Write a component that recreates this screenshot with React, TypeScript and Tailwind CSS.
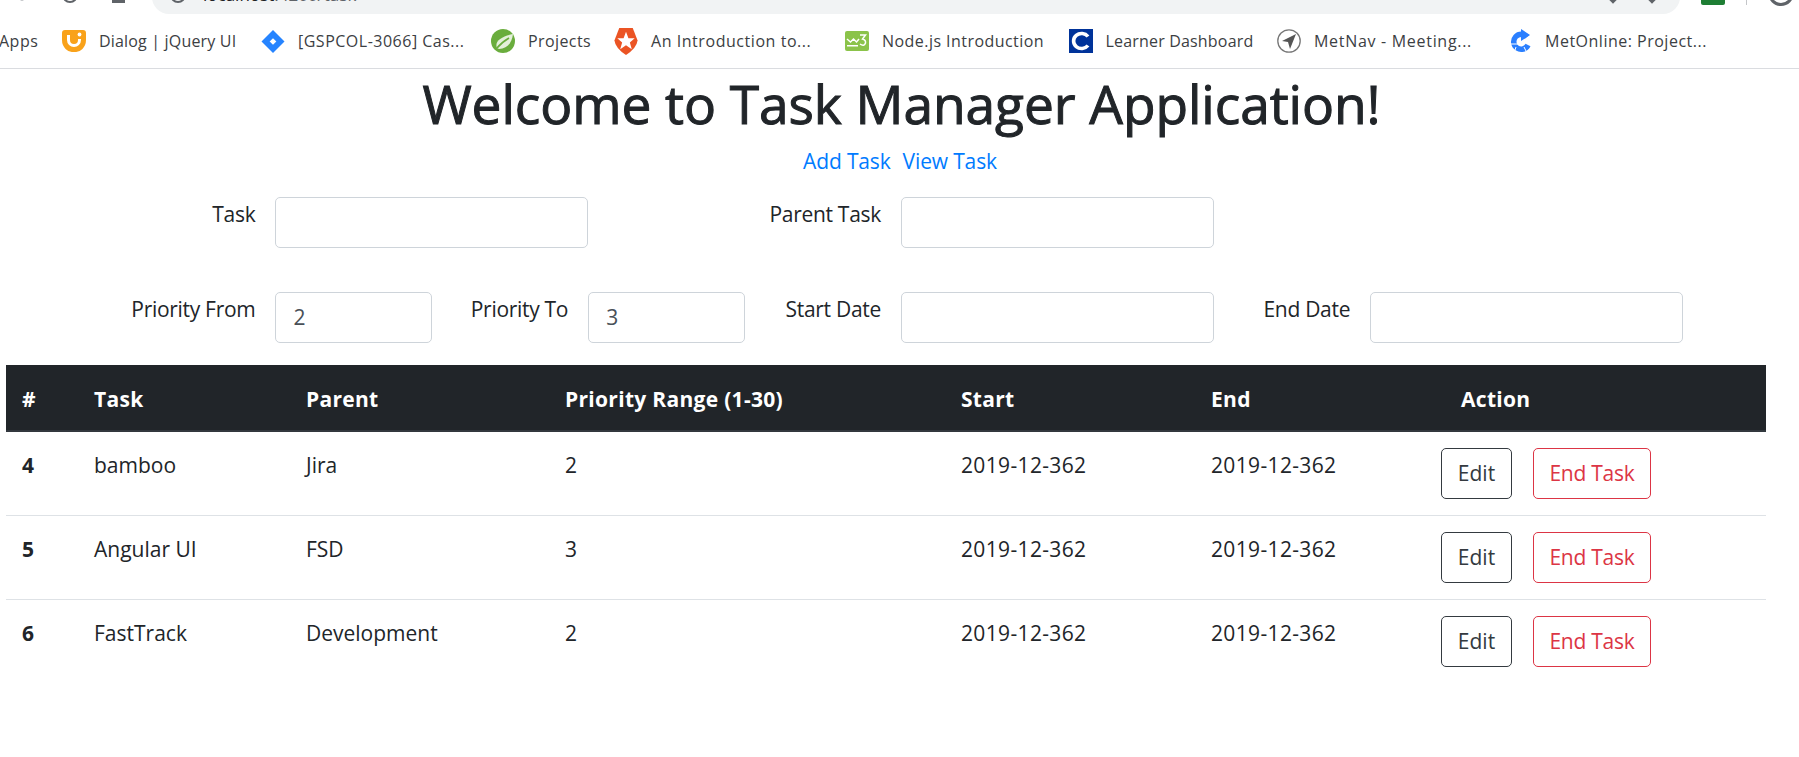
const font = { fontFamily: '"Open Sans", "Noto Sans", sans-serif' };

const Orange = () => (
  <svg width="24" height="22" viewBox="0 0 24 22"><path d="M0 3Q0 0 3 0H21Q24 0 24 3V10A11 12 0 0 1 12 22A11 12 0 0 1 0 10Z" fill="#f9a21a"/><path d="M6.5 5V10A5.5 5.5 0 0 0 17.500 10V9" stroke="#fff" strokeWidth="3" fill="none"/><circle cx="17.500" cy="4.500" r="1.900" fill="#fff"/></svg>
);
const Jira = () => (
  <svg width="24" height="23" viewBox="0 0 24 24"><path d="M12 0L24 12L12 24L0 12Z" fill="#2684ff"/><path d="M12 8.500L15.500 12L12 15.500L8.500 12Z" fill="#fff"/></svg>
);
const Spring = () => (
  <svg width="24" height="24" viewBox="0 0 24 24"><circle cx="12" cy="12" r="12" fill="#6aad3d"/><path d="M6 19C3 12 11 7 22 5C21 14 16 20 8 20Z" fill="#e4f0da"/><path d="M6 19C10 14 13 12 18 9" stroke="#6aad3d" strokeWidth="1.600" fill="none"/></svg>
);
const Auth0 = () => (
  <svg width="24" height="27" viewBox="0 0 24 28"><path d="M5 0H19L24 13Q23 21 12 28Q1 21 0 13Z" fill="#eb5424"/><path d="M12 4L14.500 10.500H21L16 15L18 22L12 18L6 22L8 15L3 10.500H9.500Z" fill="#fff"/></svg>
);
const W3 = () => (
  <svg width="24" height="20" viewBox="0 0 24 20"><rect width="24" height="20" rx="2" fill="#8bc34a"/><path d="M2 8L5.500 11L8.500 8L11.500 11L14 8" stroke="#fff" strokeWidth="1.500" fill="none"/><path d="M15 4H20.500L17.500 8Q21 9 20.500 12Q19 16 15 13" stroke="#fff" strokeWidth="1.500" fill="none"/><rect x="2" y="14" width="11" height="1.500" fill="#fff"/></svg>
);
const C = () => (
  <svg width="24" height="24" viewBox="0 0 24 24"><rect width="24" height="24" fill="#00339a"/><path d="M19 7.500A8 7.500 0 1 0 19 16.500" stroke="#fff" strokeWidth="3.600" fill="none"/></svg>
);
const Nav = () => (
  <svg width="24" height="24" viewBox="0 0 24 24"><circle cx="12" cy="12" r="11.200" fill="#fff" stroke="#777" strokeWidth="1.300"/><path d="M19 5L5 12L11 13L13 20Z" fill="#555"/></svg>
);
const Ref = () => (
  <svg width="22" height="24" viewBox="0 0 22 24"><path d="M17 8A7.500 7.500 0 1 0 18 16" stroke="#2a7fff" strokeWidth="5.500" fill="none"/><path d="M11 0L20 6L11 12Z" fill="#2a7fff"/><path d="M0 15H8M14 18L17 24M6 18L4 24" stroke="#fff" strokeWidth="1"/></svg>
);

const bookmarks: [string, () => React.ReactElement, string, string][] = [
  ['Dialog | jQuery UI', Orange, 'w-[199px]', 'tracking-[0.18px]'],
  ['[GSPCOL-3066] Cas...', Jira, 'w-[230px]', 'tracking-[0.5px]'],
  ['Projects', Spring, 'w-[123px]', 'tracking-[0.4px]'],
  ['An Introduction to...', Auth0, 'w-[231px]', 'tracking-[0.55px]'],
  ['Node.js Introduction', W3, 'w-[223.5px]', 'tracking-[0.45px]'],
  ['Learner Dashboard', C, 'w-[208.5px]', 'tracking-[0.18px]'],
  ['MetNav - Meeting...', Nav, 'w-[233px]', 'tracking-[0.7px]'],
  ['MetOnline: Project...', Ref, 'w-[220px]', 'tracking-[0.5px]'],
];

const Input = ({ value, span = '' }: { value?: string; span?: string }) => (
  <div className={`h-[51px] rounded-[5px] border border-[#ced4da] bg-white pl-[17px] pt-[9px] text-[#495057] ${span}`}>{value}</div>
);
const Label = ({ children }: { children: string }) => (
  <div className="pt-[1px] pr-[20px] text-right leading-[32px] tracking-[-0.3px] text-[#212529]">{children}</div>
);

const rows = [
  ['4', 'bamboo', 'Jira', '2'],
  ['5', 'Angular UI', 'FSD', '3'],
  ['6', 'FastTrack', 'Development', '2'],
];
const cols = 'grid grid-cols-[72px_212px_259px_396px_250px_250px_320px]';

export default function App() {
  return (
    <div style={font} className="h-[757px] w-[1799px] overflow-hidden bg-white text-[21px] text-[#212529]">
      <div className="relative h-[14px] bg-white">
        <div className="absolute left-[152px] top-[-20px] h-[34px] w-[1528px] rounded-[17px] bg-[#f1f3f4]" />
        <div className="absolute left-[20px] top-[-3px] h-[4px] w-[4px] rounded-full bg-[#c4c6c9]" />
        <div className="absolute left-[62px] top-[-13px] h-[16px] w-[16px] rounded-full border-2 border-[#5f6368]" />
        <div className="absolute left-[112px] top-[-5px] h-[8px] w-[13px] bg-[#5f6368]" />
        <div className="absolute left-[170px] top-[-13px] h-[16px] w-[16px] rounded-full border-2 border-[#5f6368]" />
        <div className="absolute left-[203px] top-[-15px] whitespace-nowrap text-[17px] leading-[20px] text-[#202124]">localhost<span className="text-[#5f6368]">:4200/task</span></div>
        <div className="absolute left-[1609px] top-[-6px] h-[8px] w-[8px] rotate-45 bg-[#5f6368]" />
        <div className="absolute left-[1648px] top-[-6px] h-[8px] w-[8px] rotate-45 bg-[#5f6368]" />
        <div className="absolute left-[1701px] top-[-8px] h-[13px] w-[24px] rounded-[2px] bg-[#1e7e34]" />
        <div className="absolute left-[1746px] top-0 h-[5px] w-px bg-[#c4c6c9]" />
        <div className="absolute left-[1768px] top-[-20px] h-[26px] w-[26px] rounded-full border-[3px] border-[#5f6368]" />
      </div>
      <div className="flex h-[55px] items-center border-b border-[#dadce0] text-[16px] text-[#3c4043]">
        <span className="ml-[-1px] w-[63px] shrink-0 tracking-[0.5px]">Apps</span>
        {bookmarks.map(([label, Icon, width, tracking]) => (
          <div key={label} className={`flex shrink-0 items-center gap-[13px] ${width}`}>
            <Icon />
            <span className={`whitespace-nowrap ${tracking}`}>{label}</span>
          </div>
        ))}
      </div>

      <h1 className="mt-[3px] ml-[4px] text-center text-[53.3px] font-normal leading-[64px] tracking-[-0.08px] text-[#212529] [-webkit-text-stroke:1px_#212529]">Welcome to Task Manager Application!</h1>
      <div className="mt-[9px] ml-[1px] flex h-[32px] justify-center gap-[12px] leading-[32px] tracking-[-0.15px] text-[#007bff]">
        <span>Add Task</span>
        <span>View Task</span>
      </div>

      <div className="ml-[119px] mt-[20px] grid w-[1564px] grid-cols-[repeat(10,156.4px)]">
        <Label>Task</Label>
        <Input span="col-span-2" />
        <div />
        <Label>Parent Task</Label>
        <Input span="col-span-2" />
      </div>
      <div className="ml-[119px] mt-[44px] grid w-[1564px] grid-cols-[repeat(10,156.4px)]">
        <Label>Priority From</Label>
        <Input value="2" />
        <Label>Priority To</Label>
        <Input value="3" />
        <Label>Start Date</Label>
        <Input span="col-span-2" />
        <Label>End Date</Label>
        <Input span="col-span-2" />
      </div>

      <div className="ml-[6px] mt-[22px] w-[1760px]">
        <div className={`${cols} h-[67px] items-center border-b-2 border-[#32383e] bg-[#212529] pl-[16px] pt-[4px] font-bold tracking-[0.3px] text-white`}>
          <span>#</span>
          <span>Task</span>
          <span>Parent</span>
          <span>Priority Range (1-30)</span>
          <span>Start</span>
          <span>End</span>
          <span>Action</span>
        </div>
        {rows.map((r, i) => (
          <div key={r[0]} className={`${cols} h-[84px] pl-[16px] pt-[16px] ${i < 2 ? 'border-b border-[#dee2e6]' : ''}`}>
            <span className="pt-[1px] font-bold leading-[32px]">{r[0]}</span>
            <span className="pt-[1px] leading-[32px]">{r[1]}</span>
            <span className="pt-[1px] leading-[32px]">{r[2]}</span>
            <span className="pt-[1px] leading-[32px]">{r[3]}</span>
            <span className="pt-[1px] leading-[32px] tracking-[0.35px]">2019-12-362</span>
            <span className="pt-[1px] leading-[32px] tracking-[0.35px]">2019-12-362</span>
            <div className="ml-[-20px] flex gap-[21px]">
              <button className="h-[51px] w-[71px] rounded-[5px] border border-[#343a40] pt-[1px] text-[#343a40]">Edit</button>
              <button className="h-[51px] w-[118px] rounded-[5px] border border-[#dc3545] pt-[1px] tracking-[-0.25px] text-[#dc3545]">End Task</button>
            </div>
          </div>
        ))}
      </div>
    </div>
  );
}
